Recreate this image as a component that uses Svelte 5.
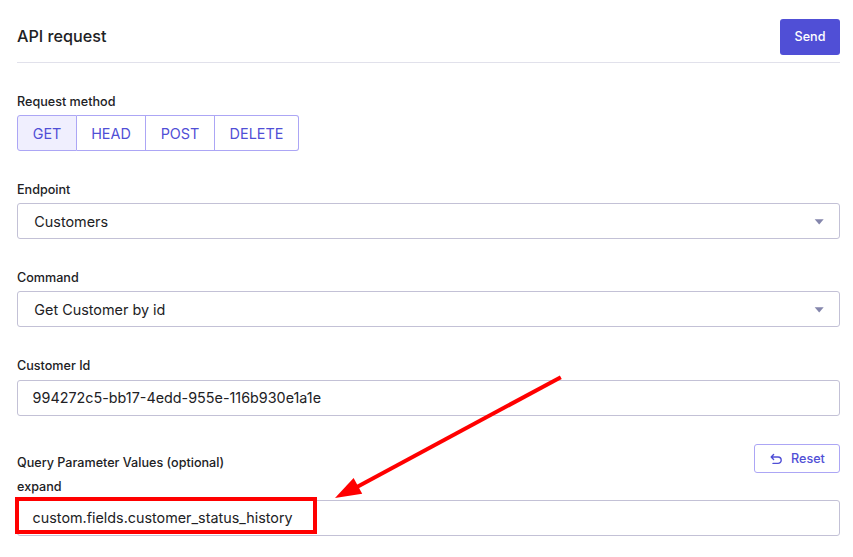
<script>
  const methods = [
    { name: 'GET', width: 60 },
    { name: 'HEAD', width: 69 },
    { name: 'POST', width: 69 },
    { name: 'DELETE', width: 84 }
  ];
  const selects = [
    { label: 'Endpoint', value: 'Customers' },
    { label: 'Command', value: 'Get Customer by id' }
  ];
  let active = $state('GET');
</script>

<main>
  <header>
    <h1>API request</h1>
    <button class="send">Send</button>
  </header>

  <section class="field">
    <div class="label">Request method</div>
    <div class="group">
      {#each methods as m}
        <button class:active={active === m.name} style="width: {m.width}px" onclick={() => (active = m.name)}>{m.name}</button>
      {/each}
    </div>
  </section>

  {#each selects as s}
    <section class="field">
      <div class="label">{s.label}</div>
      <div class="box select">
        <span>{s.value}</span>
        <svg width="10" height="6" viewBox="0 0 10 6"><path d="M0.7 0.2H9.7L5.2 5.4Z" fill="#8486ac" /></svg>
      </div>
    </section>
  {/each}

  <section class="field id">
    <div class="label">Customer Id</div>
    <div class="box"><span>994272c5-bb17-4edd-955e-116b930e1a1e</span></div>
  </section>

  <section class="params">
    <div class="row">
      <div class="label">Query Parameter Values (optional)</div>
      <button class="reset">
        <svg width="12" height="12" viewBox="0 0 12 12" fill="none" stroke="#504fd6" stroke-width="1.4" stroke-linecap="round" stroke-linejoin="round">
          <path d="M3.6 1.6L1.2 4L3.6 6.4M1.4 4H8A3.2 3.2 0 0 1 8 10.4H3" />
        </svg>
        <span>Reset</span>
      </button>
    </div>
    <div class="label expand">expand</div>
    <div class="box"><span>custom.fields.customer_status_history</span></div>
    <div class="highlight"></div>
  </section>

  <svg class="arrow" width="853" height="557" viewBox="0 0 853 557">
    <path d="M560.8 377.2L356 487.5" stroke="#f00" stroke-width="4" />
    <path d="M335 498L353.6 478L362.2 493.8Z" fill="#f00" />
  </svg>
</main>

<style>
  :global(body) {
    background: #fff;
  }
  main {
    position: relative;
    box-sizing: border-box;
    width: 853px;
    height: 557px;
    padding: 19px 13px 0 17px;
    overflow: hidden;
    font-family: Inter, 'Liberation Sans', sans-serif;
    color: #212124;
  }
  button {
    box-sizing: border-box;
    margin: 0;
    padding: 0;
    font-family: inherit;
    cursor: pointer;
  }
  header {
    display: flex;
    justify-content: space-between;
    height: 43px;
    border-bottom: 1px solid #e1e1eb;
    margin-bottom: 30px;
  }
  h1 {
    margin: 0;
    font-size: 16.2px;
    line-height: 35px;
    font-weight: 500;
  }
  .send {
    width: 60px;
    height: 36px;
    padding-bottom: 1px;
    border: 0;
    border-radius: 3px;
    background: #504fd6;
    color: #fff;
    font-size: 12.6px;
    font-weight: 500;
  }
  .label {
    font-size: 12.6px;
    line-height: 18px;
    height: 22px;
    font-weight: 500;
  }
  .field {
    height: 88px;
  }
  .group {
    display: flex;
    height: 36px;
  }
  .group button {
    border: 1px solid #aca6f5;
    border-left-width: 0;
    background: #fff;
    color: #504fd6;
    font-size: 14.4px;
  }
  .group button:first-child {
    border-left-width: 1px;
    border-radius: 3px 0 0 3px;
  }
  .group button:last-child {
    border-radius: 0 3px 3px 0;
  }
  .group button.active {
    background: #f0effe;
  }
  .box {
    box-sizing: border-box;
    display: flex;
    align-items: center;
    height: 36px;
    border: 1px solid #c3c1d6;
    border-radius: 3px;
    padding: 0 14.6px;
    font-size: 14.35px;
    line-height: 20px;
  }
  .select {
    justify-content: space-between;
    padding: 1px 15px 0 16.3px;
    font-size: 14.4px;
  }
  .id {
    height: 87px;
  }
  .id .label {
    height: 23px;
  }
  .params {
    position: relative;
  }
  .row {
    display: flex;
    justify-content: space-between;
    height: 34px;
  }
  .row .label {
    padding-top: 10px;
  }
  .expand {
    height: 22px;
  }
  .reset {
    display: flex;
    align-items: center;
    gap: 9px;
    width: 86px;
    height: 29px;
    padding-left: 15px;
    border: 1px solid #aca6f5;
    border-radius: 3px;
    background: #fff;
    color: #504fd6;
    font-size: 12.6px;
    font-weight: 500;
  }
  .highlight {
    position: absolute;
    left: -2px;
    top: 53px;
    box-sizing: border-box;
    width: 302px;
    height: 37px;
    border: 4px solid #f00;
  }
  .arrow {
    position: absolute;
    left: 0;
    top: 0;
    pointer-events: none;
  }
</style>
